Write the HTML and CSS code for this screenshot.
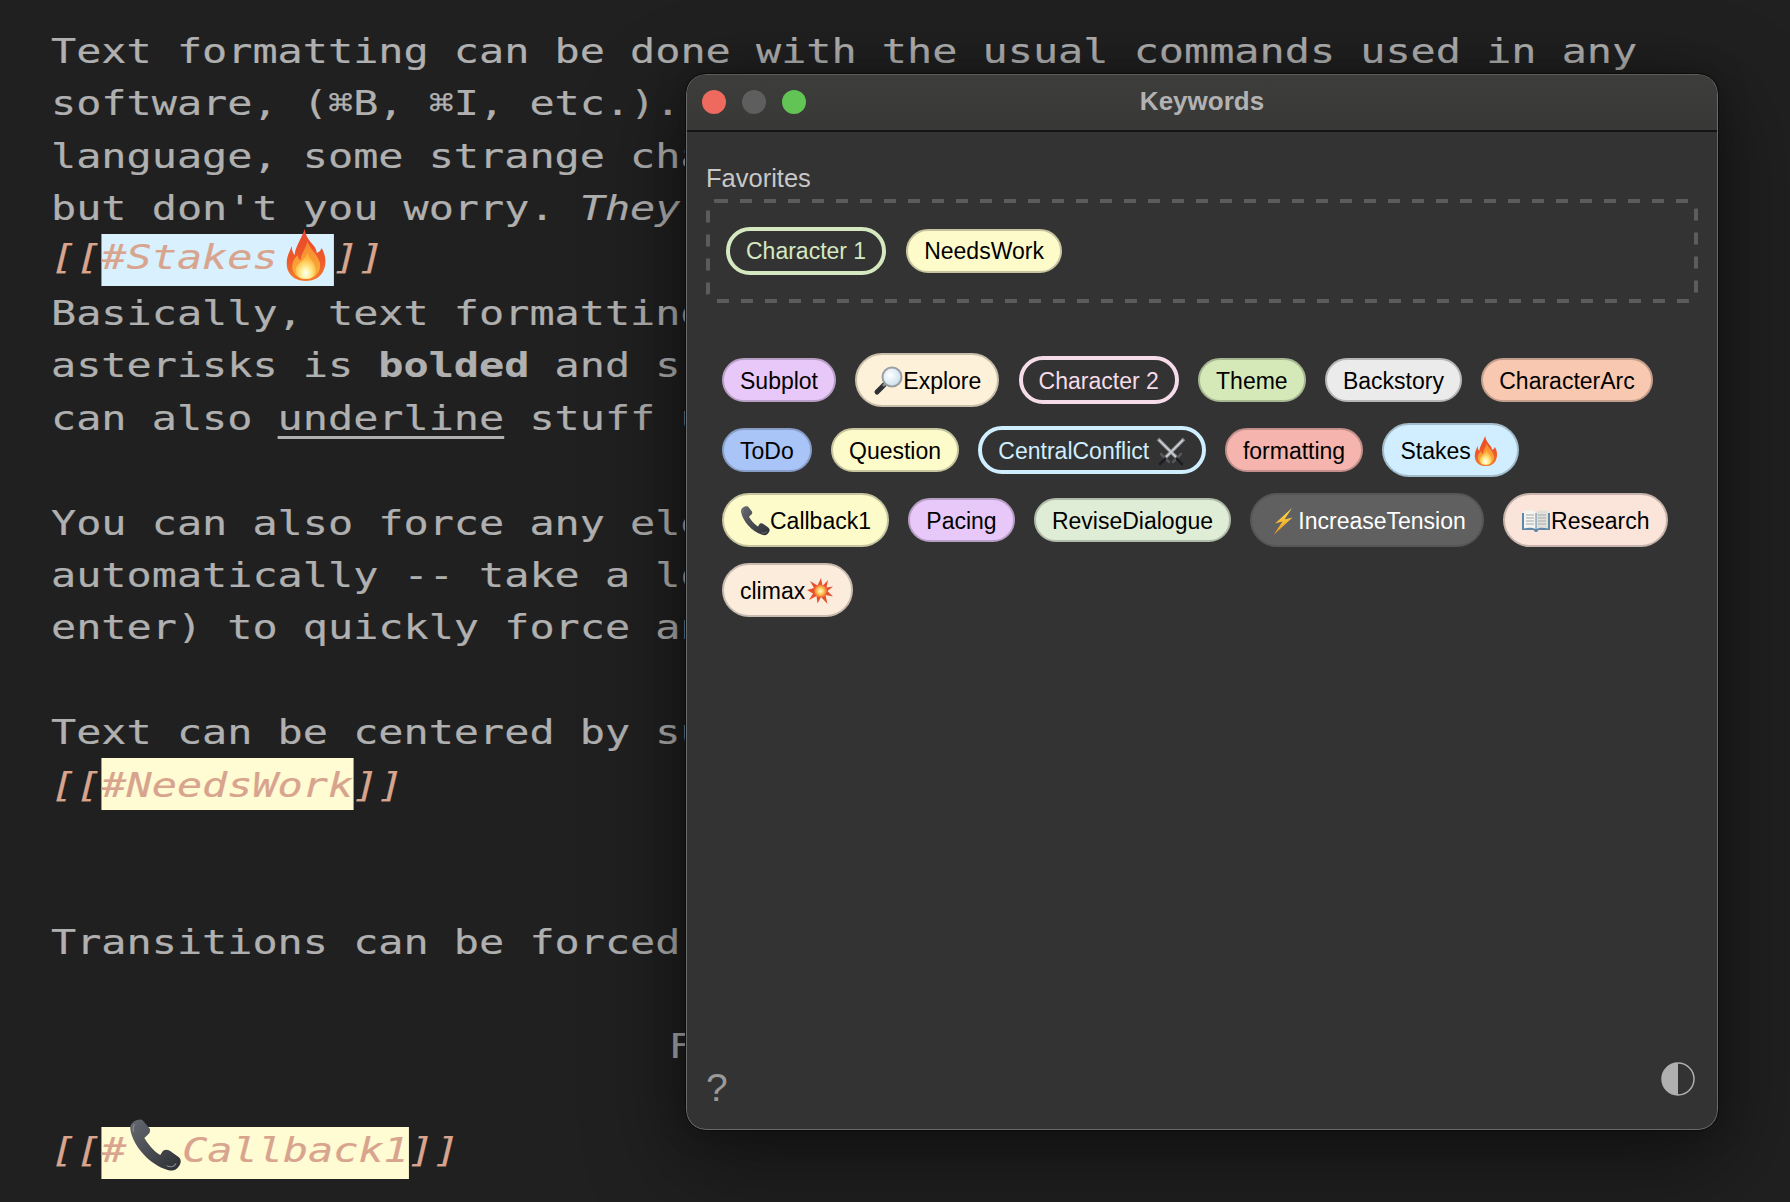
FILE: index.html
```html
<!DOCTYPE html>
<html lang="en">
<head>
<meta charset="utf-8">
<title>Keywords</title>
<link rel="stylesheet" href="styles.css">
</head>
<body>
<svg class="sprite" aria-hidden="true">
  <defs>
    <linearGradient id="fireG" x1="0" y1="0" x2="0" y2="1"><stop offset="0" stop-color="#e8492a"/><stop offset="0.6" stop-color="#ee5a2a"/><stop offset="1" stop-color="#f47a2c"/></linearGradient>
    <linearGradient id="fireM" x1="0" y1="0" x2="0" y2="1"><stop offset="0" stop-color="#f6862e"/><stop offset="1" stop-color="#fbb23c"/></linearGradient>
    <radialGradient id="fireC" cx="0.5" cy="0.78" r="0.6"><stop offset="0" stop-color="#ffffff"/><stop offset="0.35" stop-color="#fff3a0"/><stop offset="1" stop-color="#ffb436"/></radialGradient>
    <linearGradient id="phoneG" x1="0" y1="0" x2="1" y2="1"><stop offset="0" stop-color="#666a70"/><stop offset="1" stop-color="#2c2e32"/></linearGradient>
    <linearGradient id="boltG" x1="0" y1="0" x2="0" y2="1"><stop offset="0" stop-color="#ffdf55"/><stop offset="1" stop-color="#ef9418"/></linearGradient>
    <radialGradient id="lensG" cx="0.4" cy="0.4" r="0.7"><stop offset="0" stop-color="#ffffff"/><stop offset="1" stop-color="#c4dcec"/></radialGradient>
    <radialGradient id="boomG"><stop offset="0" stop-color="#fffbe0"/><stop offset="0.45" stop-color="#ffd060"/><stop offset="1" stop-color="#f2682f"/></radialGradient>
  </defs>
  <symbol id="i-fire" viewBox="0 0 41 52">
    <path fill="url(#fireG)" d="M19 0C20 8 24 12 29 18C30 20 31 22 31 24C34 23 35 21 36 19C40 26 41 34 38 41C35 48 29 52 20 52C11 52 5 48 2 41C0 35 1 28 4 22L6 17C6 21 7 24 9 26C9 19 15 11 19 0Z"/>
    <path fill="url(#fireM)" d="M22 12C23 19 31 24 34 33C36 41 31 50 20 50C10 50 5 42 7 34C8 30 10 28 12 26C12 29 14 31 15 31C15 25 20 20 22 12Z"/>
    <path fill="url(#fireC)" d="M22 24C23 30 30 33 30 41C30 47 26 50 20 50C14 50 10 47 10 41C10 35 19 32 22 24Z"/>
  </symbol>
  <symbol id="i-phone" viewBox="0 0 50 50">
    <path fill="url(#phoneG)" d="M8 1C3 3 1 6 2 11C5 26 20 43 37 48C43 50 47 47 49 42C50 39 49 37 46 35L39 30C36 28 33 29 32 31L30 34C24 31 18 23 15 18L18 15C20 14 21 11 20 9L15 3C13 0 11 0 8 1Z"/>
    <path fill="none" stroke="#8b8f95" stroke-width="1" d="M6 5C4 7 4 9 5 12M36 44C40 46 43 45 45 42"/>
  </symbol>
  <symbol id="i-lens" viewBox="0 0 30 30">
    <path stroke="#2e3033" stroke-width="5" stroke-linecap="round" d="M4 26L11 19"/>
    <path stroke="#8a8d90" stroke-width="2.5" d="M10 20L13 17"/>
    <circle cx="19" cy="11" r="9.5" fill="url(#lensG)" stroke="#9b9fa3" stroke-width="2"/>
  </symbol>
  <symbol id="i-swords" viewBox="0 0 30 30">
    <path stroke="#8f9399" stroke-width="3.5" d="M28 3L9 22M2 3L21 22"/>
    <path stroke="#d6d8da" stroke-width="1.2" d="M27 4L10 21M3 4L20 21"/>
    <path stroke="#55585c" stroke-width="2.5" stroke-linecap="round" d="M5 18L13 26M25 18L17 26"/>
    <path stroke="#1c1d1f" stroke-width="2.5" stroke-linecap="round" d="M9 23L4 28M21 23L26 28"/>
  </symbol>
  <symbol id="i-bolt" viewBox="0 0 20 27">
    <path fill="url(#boltG)" d="M19 0L2 15.5L9.5 13.5L0.5 27L19.5 9.5L11.5 11.5Z"/>
  </symbol>
  <symbol id="i-book" viewBox="0 0 28 22">
    <path fill="#5f87a8" d="M0 3H28V20H16.5L15 22H13L11.5 20H0Z"/>
    <path fill="#f4f4f0" d="M2 1C6 0 11 0 13.5 2V19C10.5 17.5 6 17.5 2 18.5Z"/>
    <path fill="#dfe0da" d="M26 1C22 0 17 0 14.5 2V19C17.5 17.5 22 17.5 26 18.5Z"/>
    <path stroke="#a8aaa8" stroke-width="1" d="M4 5H12M4 8H12M4 11H12M4 14H12M16 5H24M16 8H24M16 11H24M16 14H24"/>
  </symbol>
  <symbol id="i-boom" viewBox="0 0 26 26">
    <path fill="#e5502f" d="M14 0L15.5 8L21 2L19.5 9.5L26 8.5L20.5 13L26 18.5L18.5 17L20.5 26L14 19L10.5 25.5L9.5 18L2 22L6 15.5L0 12L7 10L3 3L10.5 7.5Z"/>
    <circle cx="13.5" cy="13" r="6.5" fill="url(#boomG)"/>
  </symbol>
</svg>

<main class="editor">
  <div class="line">Text formatting can be done with the usual commands used in any</div>
  <div class="line">software, (⌘B, ⌘I, etc.).</div>
  <div class="line">language, some strange cha</div>
  <div class="line">but don't you worry. <em>They</em></div>
  <div class="line line-stakes"><span class="mark">[[<span class="hl hl-blue hl-emoji">#Stakes<svg class="hl-fire"><use href="#i-fire"/></svg></span>]]</span></div>
  <div class="line">Basically, text formatting</div>
  <div class="line">asterisks is <strong>bolded</strong> and s</div>
  <div class="line">can also <u>underline</u> stuff u</div>
  <div class="line"></div>
  <div class="line">You can also force any ele</div>
  <div class="line">automatically -- take a lo</div>
  <div class="line">enter) to quickly force an</div>
  <div class="line"></div>
  <div class="line">Text can be centered by su</div>
  <div class="line"><span class="mark">[[<span class="hl hl-yellow">#NeedsWork</span>]]</span></div>
  <div class="line"></div>
  <div class="line"></div>
  <div class="line">Transitions can be forced</div>
  <div class="line"></div>
  <div class="line line-center">F</div>
  <div class="line"></div>
  <div class="line line-callback"><span class="mark">[[<span class="hl hl-yellow hl-emoji">#<svg class="hl-phone"><use href="#i-phone"/></svg>Callback1</span>]]</span></div>
</main>

<section class="window">
  <header class="titlebar">
    <div class="lights">
      <span class="light light-red"></span>
      <span class="light light-gray"></span>
      <span class="light light-green"></span>
    </div>
    <h1 class="title">Keywords</h1>
  </header>
  <div class="content">
    <h2 class="label">Favorites</h2>
    <div class="favorites">
      <svg class="dashes" aria-hidden="true"><rect x="2" y="2" width="988" height="100" rx="8"/></svg>
      <span class="pill outline o-green">Character 1</span>
      <span class="pill c-yellow">NeedsWork</span>
    </div>
    <div class="keywords">
      <span class="pill c-purple">Subplot</span>
      <span class="pill tall c-cream"><svg class="emoji"><use href="#i-lens"/></svg>Explore</span>
      <span class="pill outline o-pink">Character 2</span>
      <span class="pill c-green">Theme</span>
      <span class="pill c-gray">Backstory</span>
      <span class="pill c-salmon">CharacterArc</span>
      <span class="pill c-blue">ToDo</span>
      <span class="pill c-yellow">Question</span>
      <span class="pill outline o-blue">CentralConflict&nbsp;<svg class="emoji"><use href="#i-swords"/></svg></span>
      <span class="pill c-red">formatting</span>
      <span class="pill tall c-sky">Stakes<svg class="emoji emoji-fire"><use href="#i-fire"/></svg></span>
      <span class="pill tall c-yellow"><svg class="emoji"><use href="#i-phone"/></svg>Callback1</span>
      <span class="pill c-purple">Pacing</span>
      <span class="pill c-sage">ReviseDialogue</span>
      <span class="pill tall c-dark"><svg class="emoji emoji-bolt"><use href="#i-bolt"/></svg>IncreaseTension</span>
      <span class="pill tall c-peach"><svg class="emoji emoji-book"><use href="#i-book"/></svg>Research</span>
      <span class="pill tall c-sand">climax<svg class="emoji emoji-boom"><use href="#i-boom"/></svg></span>
    </div>
    <footer class="footer">
      <span class="help">?</span>
      <svg class="contrast" viewBox="0 0 34 34" aria-hidden="true">
        <circle cx="17" cy="17" r="16" fill="none" stroke="#b0b0b0" stroke-width="1.5"/>
        <path fill="#b0b0b0" d="M17 1A16 16 0 0 0 17 33Z"/>
      </svg>
    </footer>
  </div>
</section>
</body>
</html>
```
FILE: styles.css
```css
* { box-sizing: border-box; }
html, body { margin: 0; height: 1202px; overflow: hidden; }
body { background: #202020; }
.sprite { position: absolute; width: 0; height: 0; }

/* editor: the reference's monospace is drawn wider than it is tall */
.editor {
  width: 1340px;
  padding: 25px 0 0 0;
  margin-left: 50.5px;
  transform: scaleX(1.23);
  transform-origin: 0 0;
  font-family: "DejaVu Sans Mono", monospace;
  font-size: 34px;
  color: #b0b0b0;
  -webkit-text-stroke: 0.2px #b0b0b0;
}
.line { height: 52.4px; line-height: 52.4px; white-space: pre; }
.line-stakes { margin-top: -3.3px; margin-bottom: 3.3px; }
.line-callback { margin-top: -1.3px; }
.line-center { padding-left: 502px; }
.editor u { text-decoration-thickness: 3px; text-underline-offset: 6px; }
.mark { color: #d8a48e; font-style: italic; -webkit-text-stroke-color: #d8a48e; }
.hl {
  display: inline-block;
  height: 52px;
  line-height: 54.7px;
}
.hl-emoji { line-height: 46.5px; }
.hl-blue { background: #d9f1ff; }
.hl-yellow { background: #fffbd2; }
.hl-fire { width: 41px; height: 52px; margin: -18px 2.25px 0 2.25px; vertical-align: -12px; overflow: visible; transform: scaleX(0.813); }
.hl-phone { width: 53px; height: 53px; margin: -9px -3.9px 0 -3.9px; vertical-align: -10px; overflow: visible; transform: scaleX(0.813); }

/* window */
.window {
  position: absolute;
  left: 686px;
  top: 74px;
  width: 1032px;
  height: 1056px;
  display: flex;
  flex-direction: column;
  background: #333333;
  border-radius: 20px;
  border: 1px solid #6a6a6a;
  border-top-color: #5c5c5c;
  outline: 1px solid #0c0c0c;
  box-shadow: 0 0 30px rgba(0, 0, 0, 0.25), 0 28px 90px 10px rgba(0, 0, 0, 0.42);
  font-family: "Liberation Sans", Arial, sans-serif;
  overflow: hidden;
}
.titlebar {
  flex: none;
  position: relative;
  height: 57px;
  padding-bottom: 2px;
  display: flex;
  align-items: center;
  justify-content: center;
  background: linear-gradient(#3d3d3b, #383837);
  border-bottom: 2px solid #141414;
}
.lights {
  position: absolute;
  left: 15px;
  top: 15px;
  display: flex;
  gap: 16px;
}
.light { width: 24px; height: 24px; border-radius: 50%; }
.light-red { background: #ee6a5f; }
.light-gray { background: #5e5e5e; }
.light-green { background: #61c454; }
.title {
  margin: 0;
  font-size: 26px;
  font-weight: 700;
  color: #b2b2b2;
}
.content {
  flex: 1;
  display: flex;
  flex-direction: column;
  padding: 31px 19px 0;
  min-height: 0;
}
.label {
  margin: 0 0 6px;
  height: 30px;
  line-height: 30px;
  font-size: 25.5px;
  font-weight: 400;
  color: #c8c8c8;
}
.favorites {
  position: relative;
  flex: none;
  height: 104px;
  display: flex;
  align-items: center;
  gap: 20px;
  padding-left: 20px;
}
.dashes { position: absolute; left: 0; top: 0; width: 100%; height: 100%; fill: none; stroke: #5c5c5c; stroke-width: 4; stroke-dasharray: 12 12; }
.keywords {
  margin: 50px 0 0 16px;
  display: flex;
  flex-wrap: wrap;
  align-items: center;
  gap: 16px 19.3px;
}
.keywords .pill { padding-top: 2px; }
.pill {
  position: relative;
  flex: none;
  display: inline-flex;
  align-items: center;
  height: 44px;
  padding: 0 16px;
  border: 2px solid transparent;
  border-radius: 27px;
  font-size: 23px;
  color: #000;
  white-space: pre;
}
.tall { height: 54px; }
.outline { height: 48px; border-width: 4px; background: transparent; }
.o-green { border-color: #d5e8c0; color: #d5e8c0; }
.o-pink { border-color: #f6dce9; color: #f6dce9; }
.o-blue { border-color: #cfeeff; color: #cfeeff; }
.c-yellow { background: #fefbcb; border-color: #c7c5a0; }
.c-purple { background: #e8c8f8; border-color: #b79ec4; }
.c-cream { background: #fdf1d9; border-color: #c8bea9; }
.c-green { background: #d4e8b8; border-color: #a6b791; }
.c-gray { background: #ebebeb; border-color: #b6b6b6; }
.c-salmon { background: #f8c8b0; border-color: #c39e8c; }
.c-blue { background: #a9c4f7; border-color: #879dc5; }
.c-red { background: #f5b5ae; border-color: #c28f8a; }
.c-sky { background: #d0eeff; border-color: #a2bccb; }
.c-sage { background: #dfecd6; border-color: #b0baa9; }
.c-dark { background: #606060; border-color: #565656; color: #fff; }
.c-peach { background: #fbe4da; border-color: #c7b5ad; }
.c-sand { background: #fcecdc; border-color: #c7bbaf; }
.emoji { flex: none; width: 30px; height: 30px; overflow: visible; }
.emoji-bolt { height: 27px; }
.emoji-book { height: 22px; }
.emoji-boom { height: 26px; }
.footer {
  margin-top: auto;
  height: 62px;
  display: flex;
  justify-content: space-between;
  align-items: flex-start;
}
.help { font-size: 39px; line-height: 42px; color: #9a9a9a; }
.contrast { width: 34px; height: 34px; margin: -5px 3px 0 0; }
```
